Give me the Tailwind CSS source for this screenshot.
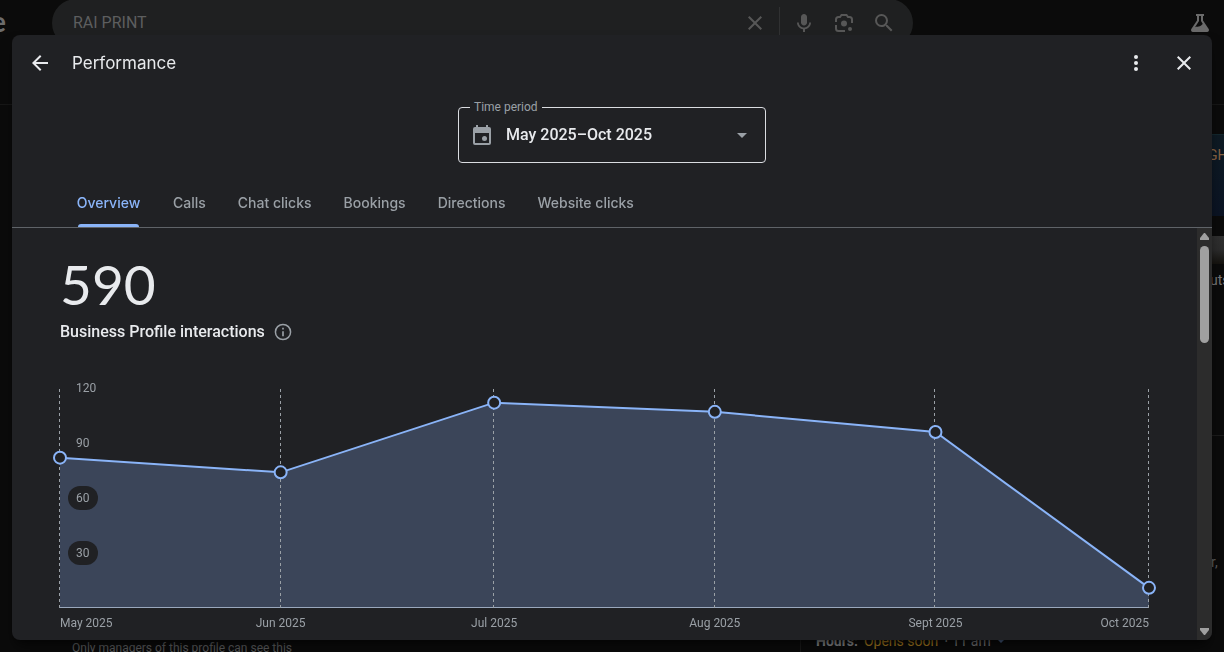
<!DOCTYPE html>
<html lang="en">
<head>
  <meta charset="UTF-8">
  <meta name="viewport" content="width=device-width, initial-scale=1.0">
  <title>Performance</title>
  <script src="https://cdn.jsdelivr.net/npm/@tailwindcss/browser@4"></script>
</head>
<body class="bg-[#0b0b0b] font-['Roboto',sans-serif] overflow-hidden">

  <!-- Search results page behind the dialog -->
  <div class="h-screen flex flex-col overflow-hidden text-[#5c5d5f]">
    <header class="h-[105px] shrink-0 flex items-start border-b border-[#171717]">
      <div class="w-[52px] shrink-0 h-[42px] flex items-center overflow-hidden">
        <span class="-ml-[9px] font-['Lato',sans-serif] font-bold text-[28px] leading-8 text-[#6c6c6c]">e</span>
      </div>
      <form class="-mt-px h-12 w-[861px] min-w-0 flex items-center rounded-full bg-[#1f2021] pl-[21px] pr-[17px]">
        <input type="text" aria-label="Search" value="RAI PRINT" class="flex-1 min-w-0 bg-transparent text-base text-[#5d5e5f] outline-none">
        <button type="button" aria-label="Clear" class="mr-3">
          <svg class="size-6" viewBox="0 0 24 24" fill="#575757"><path d="M19 6.41L17.59 5 12 10.59 6.41 5 5 6.41 10.59 12 5 17.59 6.41 19 12 13.41 17.59 19 19 17.59 13.41 12z"/></svg>
        </button>
        <div class="w-px h-8 bg-[#303132] mr-3"></div>
        <button type="button" aria-label="Search by voice" class="mr-4">
          <svg class="size-6" viewBox="0 0 24 24" fill="#575757"><path d="M12 14.5c1.66 0 3-1.34 3-3V6c0-1.66-1.34-3-3-3S9 4.34 9 6v5.5c0 1.66 1.34 3 3 3z"/><path d="M17.2 11.5c0 2.87-2.33 5-5.2 5s-5.2-2.13-5.2-5H5c0 3.53 2.61 6.23 6 6.72V21h2v-2.78c3.39-.49 6-3.19 6-6.72z"/></svg>
        </button>
        <button type="button" aria-label="Search by image" class="mr-4">
          <svg class="size-6" viewBox="0 0 24 24" fill="none" stroke="#575757" stroke-width="2"><path d="M4 11V8.5A2.5 2.5 0 0 1 6.5 6H8l1.5-2h5L16 6h1.5A2.5 2.5 0 0 1 20 8.5V12M4 14v3.5A2.5 2.5 0 0 0 6.5 20H13"/><circle cx="12" cy="12.5" r="3" fill="#575757" stroke="none"/><circle cx="18" cy="18" r="2" fill="#575757" stroke="none"/></svg>
        </button>
        <button type="button" aria-label="Search">
          <svg class="size-6" viewBox="0 0 24 24" fill="#575757"><path d="M15.5 14h-.79l-.28-.27A6.47 6.47 0 0 0 16 9.5 6.5 6.5 0 1 0 9.5 16c1.61 0 3.09-.59 4.23-1.57l.27.28v.79l5 4.99L20.49 19l-4.99-5zm-6 0C7.01 14 5 11.99 5 9.5S7.01 5 9.5 5 14 7.01 14 9.5 11.99 14 9.5 14z"/></svg>
        </button>
      </form>
      <button type="button" aria-label="Labs" class="ml-auto mr-3 mt-[11px]">
        <svg class="size-6" viewBox="0 0 24 24" fill="#6a6a6a"><path d="M8 3h8v2h-1v4.5l5.700 8.600c.8 1.400-.1 2.900-1.600 2.900H4.900c-1.500 0-2.400-1.500-1.600-2.900L9 9.500V5H8zm3 2v5.100L7 16.200c1.600-.6 3.200-.2 4.800-.9 1.500-.6 1.900-1.700 3-2.300L13 10.100V5z"/></svg>
      </button>
    </header>

    <main class="flex-1 flex min-h-0">
      <section class="flex-1 flex flex-col justify-end pl-[72px]">
        <p class="text-xs leading-4 -mb-1">Only managers of this profile can see this</p>
      </section>
      <aside class="w-[424px] shrink-0 flex flex-col border-l border-[#1a1a1a]">
        <div class="mt-[29px] ml-auto w-4 h-[82px] shrink-0 overflow-hidden border-t border-[#14282e] bg-linear-to-b from-[#0e1b24] to-[#0b1424] pt-3 text-sm leading-4 text-[#8a6544]">GH</div>
        <div class="mt-5 ml-auto w-4 h-7 shrink-0 bg-linear-to-b from-[#303030] via-[#2c2c2c] to-[#15130f]"></div>
        <a href="#" class="ml-auto mt-2 w-[14px] shrink-0 overflow-hidden text-sm leading-4 text-[#77787a]">uts</a>
        <div class="mt-[147px] shrink-0 border-t border-[#1c1c1c]"></div>
        <p class="mt-[118px] ml-auto w-[13px] shrink-0 overflow-hidden text-sm leading-4">r,</p>
        <p class="mt-auto mb-[3px] ml-[15px] text-sm leading-4 shrink-0 flex items-center gap-[6px] text-[#77787a]">
          <b class="text-[#8a8b8d]">Hours:</b><span class="text-[#a87c20]">Opens soon</span><span>⋅ 11 am</span>
          <svg class="w-2 h-1" viewBox="0 0 8 4" fill="#4a6288"><path d="M0 0h8L4 4z"/></svg>
        </p>
      </aside>
    </main>
  </div>

  <!-- Performance dialog -->
  <div class="fixed inset-0 flex px-3 pt-[35px] pb-3">
    <div role="dialog" aria-labelledby="title" class="flex-1 min-w-0 flex flex-col rounded-lg overflow-hidden bg-[#202124] text-[#e8eaed] shadow-lg shadow-black/50">
      <div class="h-[55px] shrink-0 flex items-center px-4 pt-px">
        <button type="button" aria-label="Back" class="mr-5">
          <svg class="size-6" viewBox="0 0 24 24" fill="#e8eaed"><path d="M20 11H7.83l5.59-5.59L12 4l-8 8 8 8 1.41-1.41L7.83 13H20z"/></svg>
        </button>
        <h1 id="title" class="flex-1 font-['Inter',sans-serif] text-[17px] leading-6">Performance</h1>
        <button type="button" aria-label="More options" class="mr-6">
          <svg class="size-6" viewBox="0 0 24 24" fill="#e8eaed"><circle cx="12" cy="6" r="2"/><circle cx="12" cy="12" r="2"/><circle cx="12" cy="18" r="2"/></svg>
        </button>
        <button type="button" aria-label="Close">
          <svg class="size-6" viewBox="0 0 24 24" fill="#e8eaed"><path d="M19 6.41L17.59 5 12 10.59 6.41 5 5 6.41 10.59 12 5 17.59 6.41 19 12 13.41 17.59 19 19 17.59 13.41 12z"/></svg>
        </button>
      </div>

      <div class="relative mt-[17px] w-[308px] h-14 shrink-0 self-center flex items-center px-[11px] rounded border border-[#dadce0]">
        <label for="period" class="absolute -top-[9px] left-[11px] px-1 bg-[#202124] text-xs leading-4 text-[#9aa0a6]">Time period</label>
        <svg class="size-6 shrink-0 mr-3" viewBox="0 0 24 24" fill="#9aa0a6"><path d="M19 4h-1V2h-2v2H8V2H6v2H5a2 2 0 0 0-2 2v14a2 2 0 0 0 2 2h14a2 2 0 0 0 2-2V6a2 2 0 0 0-2-2zm0 16H5V10h14z"/><circle cx="14.5" cy="15.5" r="2.5"/></svg>
        <select id="period" class="flex-1 min-w-0 appearance-none bg-transparent text-base leading-6 font-medium outline-none">
          <option>May 2025–Oct 2025</option>
        </select>
        <svg class="size-6 shrink-0" viewBox="0 0 24 24" fill="#9aa0a6"><path d="M7 10l5 5 5-5z"/></svg>
      </div>

      <nav class="mt-4 h-[49px] shrink-0 flex gap-8 px-16 border-b border-[#5f6368] font-['Inter',sans-serif] text-sm font-medium text-[#9aa0a6]">
        <a href="#" class="w-[65px] flex flex-col items-center text-[#8ab4f8]"><span class="flex-1 flex items-center">Overview</span><span class="-mt-[3px] w-[61px] h-[3px] rounded-t-[3px] bg-[#8ab4f8]"></span></a>
        <a href="#" class="flex items-center">Calls</a>
        <a href="#" class="flex items-center">Chat clicks</a>
        <a href="#" class="flex items-center">Bookings</a>
        <a href="#" class="flex items-center">Directions</a>
        <a href="#" class="flex items-center">Website clicks</a>
      </nav>

      <div class="flex-1 min-h-0 flex">
        <div class="flex-1 min-w-0 overflow-hidden px-12 pt-6">
          <div class="font-['Lato',sans-serif] text-[55px] leading-16">590</div>
          <div class="mt-1 flex items-center gap-2">
            <h2 class="text-base leading-6 font-medium">Business Profile interactions</h2>
            <button type="button" aria-label="About interactions">
              <svg class="size-5" viewBox="0 0 24 24" fill="#9aa0a6"><path d="M11 7h2v2h-2zm0 4h2v6h-2zm1-9a10 10 0 1 0 0 20 10 10 0 0 0 0-20zm0 18.2a8.2 8.2 0 1 1 0-16.4 8.2 8.2 0 0 1 0 16.4z"/></svg>
            </button>
          </div>
          <svg id="chart" class="mt-[45px] block w-full h-[250px] overflow-visible" role="img" aria-label="Interactions per month"></svg>
        </div>

        <div class="w-[15px] shrink-0 flex flex-col items-center bg-[#2c2c2c] pt-1 pb-1">
          <svg class="w-[9px] h-2 shrink-0" viewBox="0 0 9 8" fill="#a0a0a0"><path d="M4 1h1l4 5v2H0V6z"/></svg>
          <div class="mt-[6px] w-[9px] h-[97px] rounded-full bg-[#a0a0a0]"></div>
          <svg class="mt-auto w-[9px] h-2 shrink-0" viewBox="0 0 9 8" fill="#a0a0a0"><path d="M4 7h1l4-5V0H0v2z"/></svg>
        </div>
      </div>
    </div>
  </div>

  <script>
    // day = offset from 1 May, the time axis runs over 153 days
    const months = [
      { label: "May 2025", day: 0, value: 82 },
      { label: "Jun 2025", day: 31, value: 74 },
      { label: "Jul 2025", day: 61, value: 112 },
      { label: "Aug 2025", day: 92, value: 107 },
      { label: "Sept 2025", day: 123, value: 96 },
      { label: "Oct 2025", day: 153, value: 11 }
    ];
    const days = 153;
    const base = 219;

    function yPos(value) {
      return base - value * 220 / 120;
    }

    function drawChart() {
      const points = months.map(m => m.day + "," + yPos(m.value)).join(" ");
      let html = `<svg width="100%" height="219" viewBox="0 0 ${days} 219" preserveAspectRatio="none" overflow="visible">
        <polygon points="0,${base} ${points} ${days},${base}" fill="#8ab4f8" fill-opacity="0.25"/>
      </svg>`;
      html += `<line x1="0" x2="100%" y1="${base - 0.5}" y2="${base - 0.5}" stroke="#9aa8bd"/>`;

      // shifted by half a pixel to keep the dashed lines sharp
      months.forEach(m => {
        const x = m.day / days * 100 + "%";
        html += `<line x1="${x}" x2="${x}" y1="0" y2="${base}" transform="translate(-0.5 0)" stroke="#9aa0a6" stroke-dasharray="3 3" shape-rendering="crispEdges"/>`;
      });

      html += `<svg width="100%" height="219" viewBox="0 0 ${days} 219" preserveAspectRatio="none" overflow="visible">
        <polyline points="${points}" fill="none" stroke="#8ab4f8" stroke-width="2" vector-effect="non-scaling-stroke"/>
      </svg>`;

      months.forEach((m, i) => {
        const x = m.day / days * 100 + "%";
        const anchor = i === 0 ? "start" : i === months.length - 1 ? "end" : "middle";
        html += `<circle cx="${x}" cy="${yPos(m.value)}" r="6" fill="#202124" stroke="#8ab4f8" stroke-width="2"/>`;
        html += `<text x="${x}" y="238" text-anchor="${anchor}" class="text-xs fill-[#9aa0a6]">${m.label}</text>`;
      });

      [120, 90, 60, 30].forEach(v => {
        const y = yPos(v);
        if (v <= 60) {
          html += `<rect x="8" y="${y - 12}" width="30" height="24" rx="12" fill="#202124"/>`;
        }
        html += `<text x="16" y="${y + 4}" class="text-xs fill-[#9aa0a6]">${v}</text>`;
      });

      document.getElementById("chart").innerHTML = html;
    }

    drawChart();
  </script>
</body>
</html>
